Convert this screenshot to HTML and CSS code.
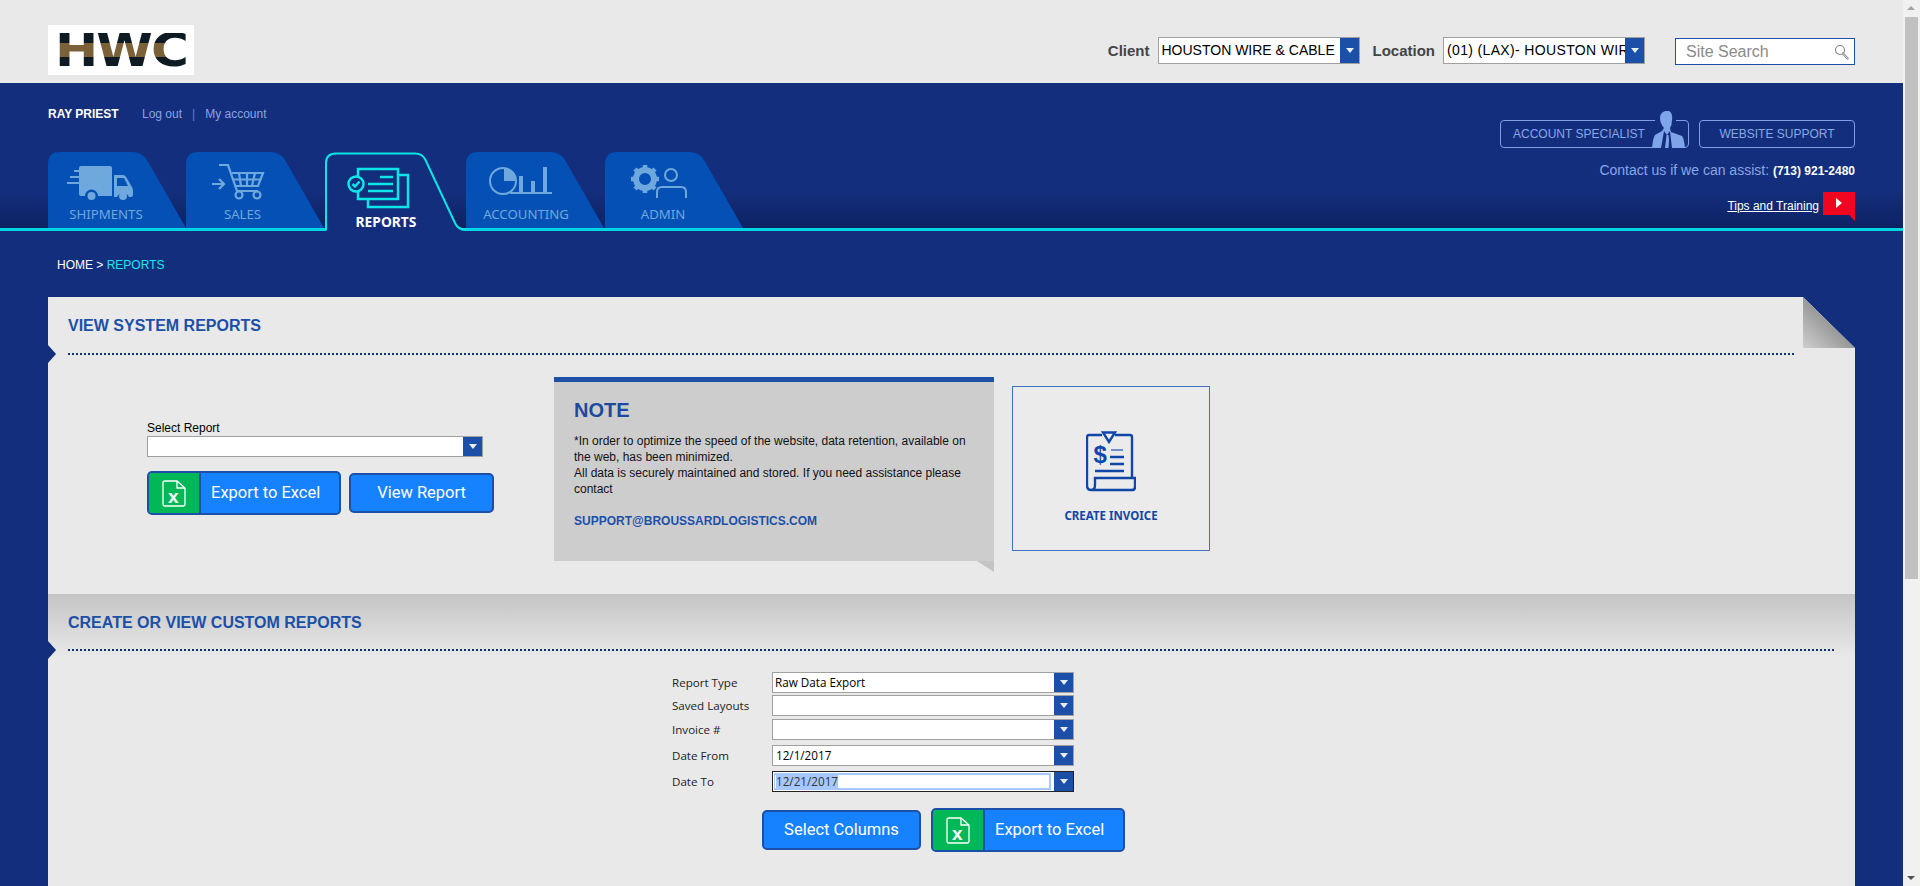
FILE: index.html
```html
<!DOCTYPE html>
<html lang="en">
<head>
  <meta charset="UTF-8">
  <meta name="viewport" content="width=device-width, initial-scale=1.0">
  <title>Reports</title>
  <link rel="stylesheet" href="styles.css">
</head>
<body>
  <div class="page">

    <!-- Logo and client pickers -->
    <header class="topbar">
      <div class="logo"><span class="logo-text">HWC</span></div>
      <div class="pickers">
        <span class="picker-label">Client</span>
        <div class="combo combo-top">
          <span class="combo-text">HOUSTON WIRE &amp; CABLE</span>
          <span class="combo-arrow"></span>
        </div>
        <span class="picker-label picker-label-next">Location</span>
        <div class="combo combo-top">
          <span class="combo-text combo-location">(01) (LAX)- HOUSTON WIRE</span>
          <span class="combo-arrow"></span>
        </div>
        <div class="search">
          <span class="search-text">Site Search</span>
          <svg class="search-icon" width="16" height="18" viewBox="0 0 16 18">
            <circle cx="6" cy="7" r="4.5" fill="#fff" stroke="#8b8b8b" stroke-width="1.2"/>
            <path d="M9 10.5l4.5 5" stroke="#8b8b8b" stroke-width="2.4" stroke-linecap="round"/>
            <path d="M9 10.5l4.5 5" stroke="#e4e4e4" stroke-width="0.8" stroke-linecap="round"/>
          </svg>
        </div>
      </div>
    </header>

    <div class="hero">
      <div class="hero-left">
        <div class="user-row">
          <span class="user-name">RAY PRIEST</span>
          <a class="user-link">Log out</a>
          <span class="user-sep">|</span>
          <a class="user-link">My account</a>
        </div>

        <!-- Main tabs -->
        <nav class="tabs">
          <a class="tab">
            <svg class="tab-shape" width="139" height="76" viewBox="0 0 139 76"><path d="M0 76V12Q0 0 12 0H84Q94 0 99 8L138 76Z"/></svg>
            <svg class="tab-icon" width="116" height="40" viewBox="0 0 116 40">
              <path class="solid" d="M31 4Q31 2 33 2H62Q64 2 64 4V32H50A6.500 6.500 0 0 0 37 32H33Q31 32 31 30Z"/>
              <path class="solid" d="M66 11H75Q77 11 78 13L84 23Q85 25 85 27V31Q85 33 83 33H81A6.500 6.500 0 0 0 69 33H66ZM69 14V22H80L76 14Z" fill-rule="evenodd"/>
              <circle class="solid" cx="43.500" cy="32" r="4"/>
              <circle class="solid" cx="75" cy="32" r="4"/>
              <path class="line" d="M26 7H31M22 13H31M19 19H31" stroke-width="2"/>
            </svg>
            <span class="tab-label">SHIPMENTS</span>
          </a>
          <a class="tab">
            <svg class="tab-shape" width="139" height="76" viewBox="0 0 139 76"><path d="M0 76V12Q0 0 12 0H84Q94 0 99 8L138 76Z"/></svg>
            <svg class="tab-icon" width="116" height="40" viewBox="0 0 116 40">
              <path class="line" d="M33 1H42L51 27H72M46 9H77L72 22H50M53 9L55 22M61 9V22M69 9L66 22M47.500 15.500H75" stroke-width="2.200"/>
              <circle class="line" cx="53" cy="31" r="3.500" stroke-width="2.200"/>
              <circle class="line" cx="71" cy="31" r="3.500" stroke-width="2.200"/>
              <path class="line" d="M26 20H38M33 15L38 20L33 25" stroke-width="2.200"/>
            </svg>
            <span class="tab-label tab-label-back">SALES</span>
          </a>
          <a class="tab tab-active">
            <svg class="tab-shape-active" width="141" height="79" viewBox="0 0 141 79">
              <path class="active-fill" d="M1 79V11Q1 1.500 11 1.500H90Q97 1.500 100 7L130 71Q133 79 140 79Z"/>
              <path class="active-line" d="M0 77.500H1V11Q1 1.500 11 1.500H90Q97 1.500 100 7L130 71Q133 77.500 140 77.500H141"/>
            </svg>
            <svg class="tab-icon-active" width="116" height="44" viewBox="0 0 116 44">
              <path class="active-icon" d="M33 10V2H73V32H33V24M73 8H83V40H43V32"/>
              <circle class="active-icon" cx="31" cy="17" r="7.500"/>
              <path class="active-icon" d="M27.500 17L30 19.500L34.500 14.500"/>
              <path class="active-icon" d="M55 10H68M43 17H68M43 24H68"/>
            </svg>
            <span class="tab-label-active">REPORTS</span>
          </a>
          <a class="tab">
            <svg class="tab-shape" width="139" height="76" viewBox="0 0 139 76"><path d="M0 76V12Q0 0 12 0H84Q94 0 99 8L138 76Z"/></svg>
            <svg class="tab-icon" width="116" height="40" viewBox="0 0 116 40">
              <circle class="line" cx="37" cy="17" r="13" stroke-width="2"/>
              <path class="solid" d="M38 4A13 13 0 0 1 50 17H38Z"/>
              <path class="line" d="M44 29H86" stroke-width="2"/>
              <path class="solid" d="M53 12H57V28H53ZM65 17H69V28H65ZM77 3H81V28H77Z"/>
            </svg>
            <span class="tab-label tab-label-shift">ACCOUNTING</span>
          </a>
          <a class="tab">
            <svg class="tab-shape" width="139" height="76" viewBox="0 0 139 76"><path d="M0 76V12Q0 0 12 0H84Q94 0 99 8L138 76Z"/></svg>
            <svg class="tab-icon" width="116" height="40" viewBox="0 0 116 40">
              <circle class="line" cx="40" cy="15" r="9" stroke-width="6"/>
              <path class="line" d="M40 1V6M40 24V29M26 15H31M49 15H54M30 5L34 9M46 21L50 25M30 25L34 21M46 9L50 5" stroke-width="4.500"/>
              <circle class="line" cx="66" cy="11" r="6" stroke-width="2"/>
              <path class="line" d="M52 34V28Q52 23 57 23H76Q81 23 81 28V34" stroke-width="2"/>
            </svg>
            <span class="tab-label">ADMIN</span>
          </a>
        </nav>
      </div>

      <div class="hero-right">
        <div class="help-buttons">
          <a class="help-btn help-btn-agent">
            ACCOUNT SPECIALIST
            <svg class="agent-figure" width="34" height="37" viewBox="0 0 34 37">
              <rect x="3" y="0" width="21" height="10" fill="#132e7c"/>
              <path d="M9 3Q12 -1 17 0Q21 2 20 9Q20 14 18 17L19 21L30 25Q32 27 33 37H0Q1 27 3 24L10 20L12 17Q8 12 8 7Q8 5 9 3Z" fill="#7fa4ea"/>
              <path d="M12 20L15 24L18 20L20 37H9Z" fill="#132e7c"/>
              <path d="M14.500 24H16.500L17 29L16.500 37H13L14 29Z" fill="#7fa4ea"/>
            </svg>
          </a>
          <a class="help-btn help-btn-support">WEBSITE SUPPORT</a>
        </div>
        <div class="contact">Contact us if we can assist: <span class="contact-phone">(713) 921-2480</span></div>
        <div class="tips">
          <a class="tips-link">Tips and Training</a>
          <span class="tips-flag"></span>
        </div>
      </div>
    </div>

    <div class="breadcrumb">HOME &gt; <span class="breadcrumb-current">REPORTS</span></div>

    <main class="content">

      <!-- System reports -->
      <section class="panel panel-system">
        <div class="fold"></div>
        <h2 class="panel-title">VIEW SYSTEM REPORTS</h2>
        <div class="dots dots-short"></div>
        <div class="system-body">
          <div class="report-picker">
            <div class="report-label">Select Report</div>
            <div class="combo combo-report"><span class="combo-text"></span><span class="combo-arrow"></span></div>
            <div class="btn-row">
              <a class="btn btn-excel">
                <span class="btn-excel-icon">
                  <svg width="24" height="27" viewBox="0 0 24 27">
                    <path d="M3 1H15L23 8V24Q23 26 21 26H3Q1 26 1 24V3Q1 1 3 1ZM15 1V8H23" fill="none" stroke="#fff" stroke-width="1.300"/>
                    <text class="excel-x" x="6" y="23">x</text>
                  </svg>
                </span>
                <span class="btn-excel-text">Export to Excel</span>
              </a>
              <a class="btn btn-plain btn-view">View Report</a>
            </div>
          </div>

          <div class="note">
            <h3 class="note-title">NOTE</h3>
            <p class="note-text">*In order to optimize the speed of the website, data retention, available on the web, has been minimized.<br>All data is securely maintained and stored. If you need assistance please contact</p>
            <a class="note-mail">SUPPORT@BROUSSARDLOGISTICS.COM</a>
          </div>

          <a class="invoice-card">
            <svg width="50" height="62" viewBox="0 0 50 62">
              <path d="M16 5H3Q1 5 1 7V55Q1 60 5 60Q9 60 9 55V48H49V57Q49 60 46 60H5" fill="none" stroke="#0f47a8" stroke-width="2.400"/>
              <path d="M29 5H44Q46 5 46 7V48" fill="none" stroke="#0f47a8" stroke-width="2.400"/>
              <path d="M17 2.500H29L23 12Z" fill="none" stroke="#0f47a8" stroke-width="2.400"/>
              <path d="M25 20H37" stroke="#6f8fce" stroke-width="2"/>
              <path d="M24 27H38M24 34H38M9 41H38" stroke="#0f47a8" stroke-width="2.400"/>
              <text class="invoice-dollar" x="7.500" y="33">$</text>
            </svg>
            <span class="invoice-label">CREATE INVOICE</span>
          </a>
        </div>
      </section>

      <!-- Custom reports -->
      <section class="panel panel-custom">
        <h2 class="panel-title">CREATE OR VIEW CUSTOM REPORTS</h2>
        <div class="dots dots-long"></div>
        <div class="custom-form">
          <div class="form-row">
            <span class="form-label">Report Type</span>
            <div class="combo combo-form"><span class="combo-text">Raw Data Export</span><span class="combo-arrow"></span></div>
          </div>
          <div class="form-row">
            <span class="form-label">Saved Layouts</span>
            <div class="combo combo-form"><span class="combo-text"></span><span class="combo-arrow"></span></div>
          </div>
          <div class="form-row row-gap-3">
            <span class="form-label">Invoice #</span>
            <div class="combo combo-form"><span class="combo-text"></span><span class="combo-arrow"></span></div>
          </div>
          <div class="form-row row-gap-5">
            <span class="form-label">Date From</span>
            <div class="combo combo-form"><span class="combo-text combo-date">12/1/2017</span><span class="combo-arrow"></span></div>
          </div>
          <div class="form-row row-gap-5">
            <span class="form-label">Date To</span>
            <div class="combo combo-form combo-focus">
              <span class="combo-text combo-date combo-inner"><span class="selected">12/21/2017</span></span>
              <span class="combo-arrow"></span>
            </div>
          </div>
        </div>
        <div class="btn-row btn-row-custom">
          <a class="btn btn-plain btn-columns">Select Columns</a>
          <a class="btn btn-excel">
            <span class="btn-excel-icon">
              <svg width="24" height="27" viewBox="0 0 24 27">
                <path d="M3 1H15L23 8V24Q23 26 21 26H3Q1 26 1 24V3Q1 1 3 1ZM15 1V8H23" fill="none" stroke="#fff" stroke-width="1.300"/>
                <text class="excel-x" x="6" y="23">x</text>
              </svg>
            </span>
            <span class="btn-excel-text">Export to Excel</span>
          </a>
        </div>
      </section>
    </main>
  </div>

  <div class="scrollbar">
    <span class="scroll-up"></span>
    <span class="scroll-thumb"></span>
    <span class="scroll-down"></span>
  </div>
</body>
</html>
```

FILE: styles.css
```css
html, body {
  height: 100%;
}

body {
  display: flex;
  margin: 0;
  overflow: hidden;
  background-color: #e9e9e9;
  color: #000;
  font-family: "Liberation Sans", Arial, sans-serif;
  font-size: 12px;
}

a {
  cursor: pointer;
}

.page {
  flex: 1;
  min-width: 0;
  background-color: #132e7c;
}

/* top bar */
.topbar {
  display: flex;
  justify-content: space-between;
  align-items: flex-start;
  height: 83px;
  box-sizing: border-box;
  padding: 25px 48px 0;
  background-color: #e9e9e9;
}

.logo {
  display: flex;
  justify-content: center;
  align-items: center;
  width: 146px;
  height: 50px;
  background-color: #fff;
}

.logo-text {
  font-family: "DejaVu Sans", sans-serif;
  font-size: 47px;
  font-weight: bold;
  line-height: 34px;
  height: 34px;
  letter-spacing: -2px;
  color: transparent;
  background: linear-gradient(#0e1b22 0, #0e1b22 30%, #7b6138 30%, #7b6138 71%, #0e1b22 71%);
  -webkit-background-clip: text;
  background-clip: text;
  transform: scaleX(1.1);
}

.pickers {
  display: flex;
  align-items: center;
  height: 27px;
  margin-top: 12px;
}

.picker-label {
  margin-right: 8px;
  font-size: 15px;
  font-weight: bold;
  color: #444;
}

.picker-label-next {
  margin-left: 13px;
}

.combo {
  display: flex;
  box-sizing: border-box;
  border: 1px solid #a0a0a0;
  background-color: #fff;
}

.combo-text {
  flex: 1;
  min-width: 0;
  overflow: hidden;
  white-space: nowrap;
}

.combo-arrow {
  position: relative;
  flex: none;
  width: 19px;
  background-color: #1b4fa8;
}

.combo-arrow::after {
  content: "";
  position: absolute;
  left: 6px;
  top: 50%;
  margin-top: -3px;
  border-left: 4px solid transparent;
  border-right: 4px solid transparent;
  border-top: 5px solid #e8eefc;
}

.combo-top {
  width: 202px;
  height: 27px;
}

.combo-top .combo-text {
  padding: 0 3px;
  font-size: 14px;
  line-height: 25px;
}

.combo-top .combo-location {
  letter-spacing: 0.35px;
}

.search {
  display: flex;
  justify-content: space-between;
  align-items: center;
  box-sizing: border-box;
  width: 180px;
  height: 27px;
  margin: 1px 0 0 30px;
  padding: 1px 4px 0 10px;
  border: 1px solid #1b4fa8;
  background-color: #fff;
}

.search-text {
  font-size: 16px;
  color: #8b8b8b;
}

/* blue header */
.hero {
  display: flex;
  justify-content: space-between;
  box-sizing: border-box;
  height: 148px;
  padding: 0 48px;
  border-bottom: 3px solid #00d6e2;
  background: linear-gradient(#132e7c 0, #132e7c 108px, #0d2263 145px);
}

.user-row {
  display: flex;
  align-items: center;
  height: 18px;
  margin-top: 22px;
  font-size: 12px;
}

.user-name {
  width: 94px;
  font-weight: bold;
  color: #fff;
}

.user-link {
  color: #8aa3e4;
}

.user-sep {
  margin: 0 10px;
  color: #5f7fd0;
}

.tabs {
  display: flex;
  margin-top: 29px;
}

.tab {
  position: relative;
  display: flex;
  flex-direction: column;
  width: 139px;
  height: 76px;
  padding-top: 12px;
  box-sizing: border-box;
}

.tab:first-child {
  width: 138px;
}

.tab-shape {
  position: absolute;
  left: 0;
  top: 0;
  fill: #0550b5;
}

.tab-icon {
  position: relative;
  display: block;
  flex: none;
  margin-bottom: 1px;
}

.tab-icon .solid {
  fill: #6fa8dc;
}

.tab-icon .line {
  fill: none;
  stroke: #6fa8dc;
}

.tab-label {
  position: relative;
  box-sizing: border-box;
  width: 116px;
  font-family: "Noto Sans", sans-serif;
  font-size: 13.2px;
  line-height: 18px;
  text-align: center;
  color: #6fa8dc;
}

.tab-label-shift {
  padding-left: 4px;
}

.tab-label-back {
  padding-right: 3px;
}

.tab-active {
  width: 141px;
  height: 79px;
  margin-bottom: -3px;
  padding-top: 15px;
}

.tab-shape-active {
  position: absolute;
  left: 0;
  top: 0;
}

.active-fill {
  fill: #132e7c;
}

.active-line {
  fill: none;
  stroke: #0be6e8;
  stroke-width: 2;
}

.active-icon {
  fill: none;
  stroke: #0be6e8;
  stroke-width: 2.500;
}

.tab-icon-active {
  position: relative;
  display: block;
  flex: none;
}

.tab-label-active {
  position: relative;
  width: 122px;
  margin-top: 2px;
  font-family: "Noto Sans", sans-serif;
  font-size: 13.8px;
  font-weight: bold;
  line-height: 18px;
  text-align: center;
  color: #fff;
}

.hero-right {
  display: flex;
  flex-direction: column;
  align-items: flex-end;
  padding-top: 37px;
}

.help-buttons {
  display: flex;
  gap: 10px;
}

.help-btn {
  box-sizing: border-box;
  height: 28px;
  border: 1px solid #7f9fe4;
  border-radius: 4px;
  font-size: 12px;
  line-height: 26px;
  color: #8aa6e6;
}

.help-btn-agent {
  position: relative;
  width: 189px;
  padding-left: 12px;
}

.help-btn-support {
  width: 156px;
  text-align: center;
}

/* the figure stands out over the top border of the button */
.agent-figure {
  position: absolute;
  right: 2px;
  bottom: -1px;
}

.contact {
  margin-top: 14px;
  font-size: 14px;
  line-height: 16px;
  color: #8aa6e6;
}

.contact-phone {
  font-size: 12px;
  font-weight: bold;
  color: #fff;
}

.tips {
  display: flex;
  align-items: flex-start;
  margin-top: 13px;
}

.tips-link {
  margin: 7px 4px 0 0;
  font-size: 12px;
  line-height: 14px;
  text-decoration: underline;
  color: #fff;
}

.tips-flag {
  position: relative;
  display: block;
  width: 32px;
  height: 29px;
  background-color: #f0061f;
  clip-path: polygon(0 0, 100% 0, 100% 100%, 26px 23px, 0 23px);
}

.tips-flag::after {
  content: "";
  position: absolute;
  left: 13px;
  top: 6px;
  border-top: 5px solid transparent;
  border-bottom: 5px solid transparent;
  border-left: 6px solid #fff;
}

.breadcrumb {
  box-sizing: border-box;
  height: 66px;
  padding: 26px 0 0 57px;
  font-size: 12px;
  line-height: 16px;
  color: #fff;
}

.breadcrumb-current {
  color: #1fe6ea;
}

/* panels */
.content {
  margin: 0 48px;
}

.panel {
  position: relative;
  box-sizing: border-box;
  background-color: #e9e9e9;
}

.panel::before {
  content: "";
  position: absolute;
  left: 0;
  border-top: 9px solid transparent;
  border-bottom: 9px solid transparent;
  border-left: 8px solid #132e7c;
}

.panel-system {
  height: 297px;
  clip-path: polygon(0 0, calc(100% - 52px) 0, 100% 51px, 100% 100%, 0 100%);
}

.panel-system::before {
  top: 48px;
}

.panel-custom {
  height: 295px;
  background: linear-gradient(#c4c4c4 0, #e9e9e9 64px);
}

.panel-custom::before {
  top: 47px;
}

.fold {
  position: absolute;
  top: 0;
  right: 0;
  width: 52px;
  height: 51px;
  background: linear-gradient(45deg, #cfcfcf 0, #8d8d8d 60%);
  clip-path: polygon(0 0, 100% 100%, 0 100%);
}

.panel-title {
  margin: 0;
  padding: 20px 0 0 20px;
  font-size: 16px;
  font-weight: bold;
  line-height: 18px;
  color: #1b4fa8;
}

.dots {
  height: 2px;
  margin: 17px 0 0 20px;
  background: repeating-linear-gradient(90deg, #132e7c 0, #132e7c 2px, transparent 2px, transparent 4px);
}

.dots-short {
  width: 1728px;
  margin-top: 18px;
}

.dots-long {
  width: 1767px;
}

.system-body {
  display: flex;
  align-items: flex-start;
  padding-top: 22px;
}

.report-picker {
  box-sizing: border-box;
  width: 506px;
  padding: 44px 0 0 99px;
}

.report-label {
  height: 15px;
  font-size: 12px;
  line-height: 14px;
}

.combo-report {
  width: 336px;
  height: 21px;
}

.btn-row {
  display: flex;
  align-items: center;
  gap: 8px;
  margin-top: 14px;
}

.btn {
  display: flex;
  box-sizing: border-box;
  border: 2px solid #1b4fa8;
  border-radius: 5px;
  overflow: hidden;
  background-color: #1782ff;
  font-family: Roboto, sans-serif;
  font-size: 16.500px;
  color: #fff;
}

.btn-excel {
  width: 194px;
  height: 44px;
  line-height: 40px;
}

.btn-excel-icon {
  display: flex;
  justify-content: center;
  align-items: center;
  width: 50px;
  border-right: 2px solid #1b4fa8;
  background-color: #00b956;
}

.btn-excel-text {
  padding-left: 10px;
}

.excel-x {
  font-family: "Liberation Sans", sans-serif;
  font-size: 19px;
  font-weight: bold;
  fill: #fff;
}

.btn-plain {
  justify-content: center;
  height: 40px;
  line-height: 36px;
}

.btn-view {
  width: 145px;
}

.note {
  position: relative;
  box-sizing: border-box;
  width: 440px;
  height: 184px;
  padding: 16px 20px 0;
  border-top: 5px solid #1e50a8;
  background-color: #cdcdcd;
}

/* little fold under the note */
.note::after {
  content: "";
  position: absolute;
  right: 0;
  bottom: -11px;
  width: 17px;
  height: 11px;
  background-color: #c4c4c4;
  clip-path: polygon(0 0, 100% 0, 100% 100%);
}

.note-title {
  margin: 0;
  font-size: 20px;
  font-weight: bold;
  line-height: 24px;
  color: #1e4a9c;
}

.note-text {
  margin: 11px 0 0;
  font-size: 12px;
  line-height: 16px;
  color: #111;
}

.note-mail {
  display: block;
  margin-top: 16px;
  font-size: 12px;
  font-weight: bold;
  line-height: 16px;
  color: #1e50a8;
}

.invoice-card {
  display: flex;
  flex-direction: column;
  align-items: center;
  box-sizing: border-box;
  width: 198px;
  height: 165px;
  margin: 9px 0 0 18px;
  padding-top: 43px;
  border: 1px solid #3b74c4;
  background-color: #ebebeb;
}

.invoice-card svg {
  flex: none;
}

.invoice-dollar {
  font-family: "Liberation Sans", sans-serif;
  font-size: 24px;
  font-weight: bold;
  fill: #0f47a8;
}

.invoice-label {
  margin-top: 16px;
  font-family: "Noto Sans", sans-serif;
  font-size: 11.500px;
  font-weight: bold;
  line-height: 16px;
  color: #0f47a8;
}

/* custom report form */
.custom-form {
  margin: 21px 0 0 624px;
}

.form-row {
  display: flex;
  align-items: center;
  margin-top: 2px;
}

.row-gap-3 {
  margin-top: 3px;
}

.row-gap-5 {
  margin-top: 5px;
}

.form-label {
  width: 100px;
  font-family: "Open Sans", sans-serif;
  font-size: 11.600px;
  color: #222;
}

.combo-form {
  width: 302px;
  height: 21px;
}

.combo-form .combo-text {
  padding-left: 2px;
  font-family: "Open Sans", sans-serif;
  font-size: 11.700px;
  line-height: 19px;
}

.combo-form .combo-date {
  padding-left: 3px;
}

.combo-focus {
  border-color: #222;
}

.combo-focus .combo-inner {
  margin: 1px 3px 1px 1px;
  padding-left: 1px;
  border: 2px solid #a6c8ff;
  border-left-width: 1px;
  overflow: visible;
  line-height: 13px;
}

.selected {
  background-color: #a6c8ff;
  color: #333;
}

.btn-row-custom {
  gap: 10px;
  margin: 16px 0 0 714px;
}

.btn-columns {
  width: 159px;
}

/* scrollbar */
.scrollbar {
  position: relative;
  flex: none;
  width: 17px;
  background-color: #f1f1f1;
}

.scroll-thumb {
  position: absolute;
  left: 2px;
  top: 17px;
  width: 13px;
  height: 562px;
  background-color: #c1c1c1;
}

.scroll-up {
  position: absolute;
  left: 4px;
  top: 6px;
  border-left: 4px solid transparent;
  border-right: 4px solid transparent;
  border-bottom: 4px solid #a3a3a3;
}

.scroll-down {
  position: absolute;
  left: 4px;
  bottom: 6px;
  border-left: 4px solid transparent;
  border-right: 4px solid transparent;
  border-top: 4px solid #505050;
}
```
